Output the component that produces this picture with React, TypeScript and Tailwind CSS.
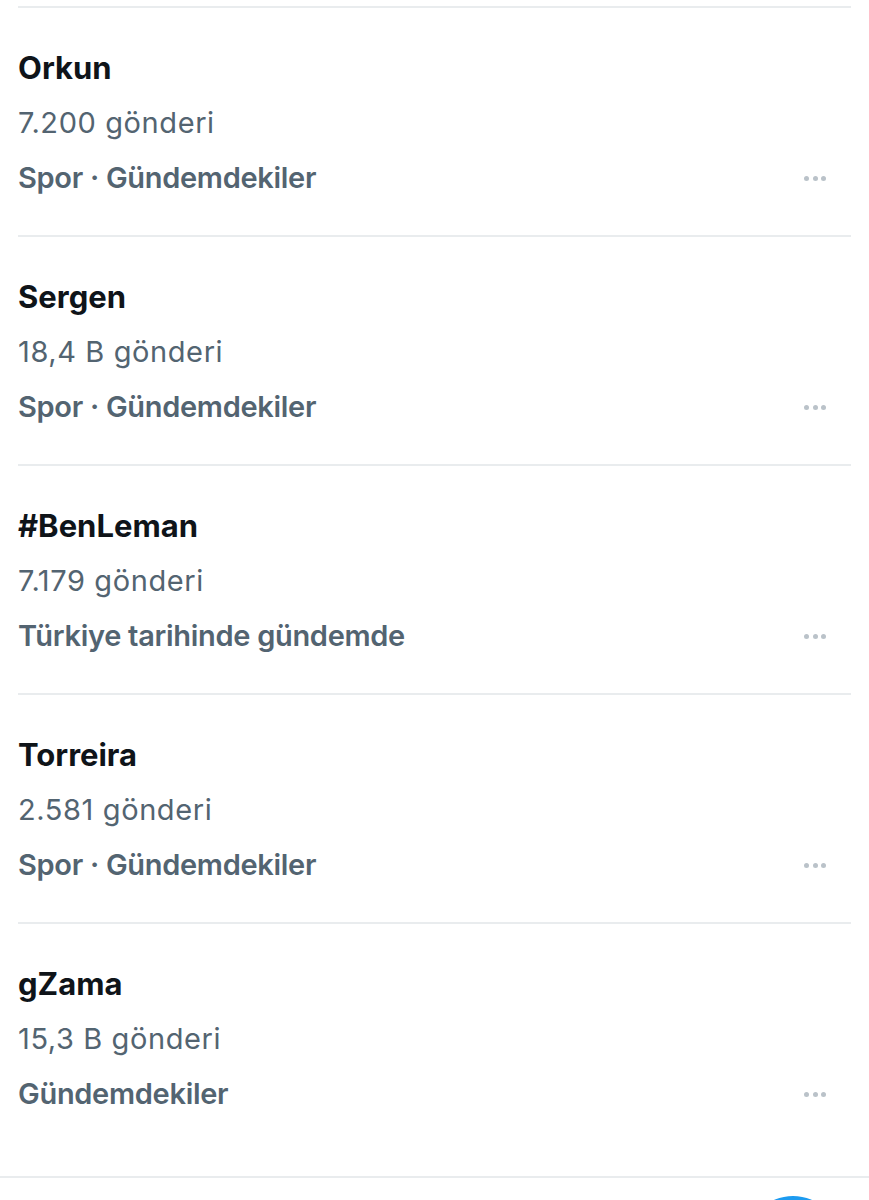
interface Trend {
  title: string;
  count: string;
  category: string;
}

const TRENDS: Trend[] = [
  { title: "Orkun", count: "7.200 gönderi", category: "Spor · Gündemdekiler" },
  { title: "Sergen", count: "18,4 B gönderi", category: "Spor · Gündemdekiler" },
  { title: "#BenLeman", count: "7.179 gönderi", category: "Türkiye tarihinde gündemde" },
  { title: "Torreira", count: "2.581 gönderi", category: "Spor · Gündemdekiler" },
  { title: "gZama", count: "15,3 B gönderi", category: "Gündemdekiler" },
];

function Dots() {
  return (
    <div className="flex items-center gap-[3.5px]">
      <span className="h-[5px] w-[5px] rounded-full bg-[#bac2c9]" />
      <span className="h-[5px] w-[5px] rounded-full bg-[#bac2c9]" />
      <span className="h-[5px] w-[5px] rounded-full bg-[#bac2c9]" />
    </div>
  );
}

function TrendRow({ trend, last }: { trend: Trend; last: boolean }) {
  return (
    <div
      className={`flex flex-col pt-[33px] ${last ? "h-[252px]" : "h-[229px] border-b-2 border-[#e9ecee]"}`}
    >
      <div className="text-[31px] font-bold leading-[54px] tracking-[0px] text-[#0f1419]">
        {trend.title}
      </div>
      <div className="text-[29px] leading-[56px] tracking-[0.6px] text-[#536471]">{trend.count}</div>
      <div className="flex items-center justify-between">
        <span className="text-[29px] font-semibold leading-[54px] tracking-[-0.3px] text-[#536471]">
          {trend.category}
        </span>
        <span className="mr-[25px]">
          <Dots />
        </span>
      </div>
    </div>
  );
}

export default function App() {
  return (
    <div
      className="relative h-[1200px] w-[869px] overflow-hidden bg-white"
      style={{ fontFamily: "Inter, 'Noto Sans', sans-serif" }}
    >
      <div className="mt-[6px] px-[18px]">
        <div className="h-[2px] bg-[#e9ecee]" />
        {TRENDS.map((t, i) => (
          <TrendRow key={t.title} trend={t} last={i === TRENDS.length - 1} />
        ))}
      </div>
      <div className="h-[2px] bg-[#e9ecee]" />
      <div className="absolute left-[746px] top-[1196px] h-[94px] w-[94px] rounded-full bg-[#1d9bf0]" />
    </div>
  );
}
